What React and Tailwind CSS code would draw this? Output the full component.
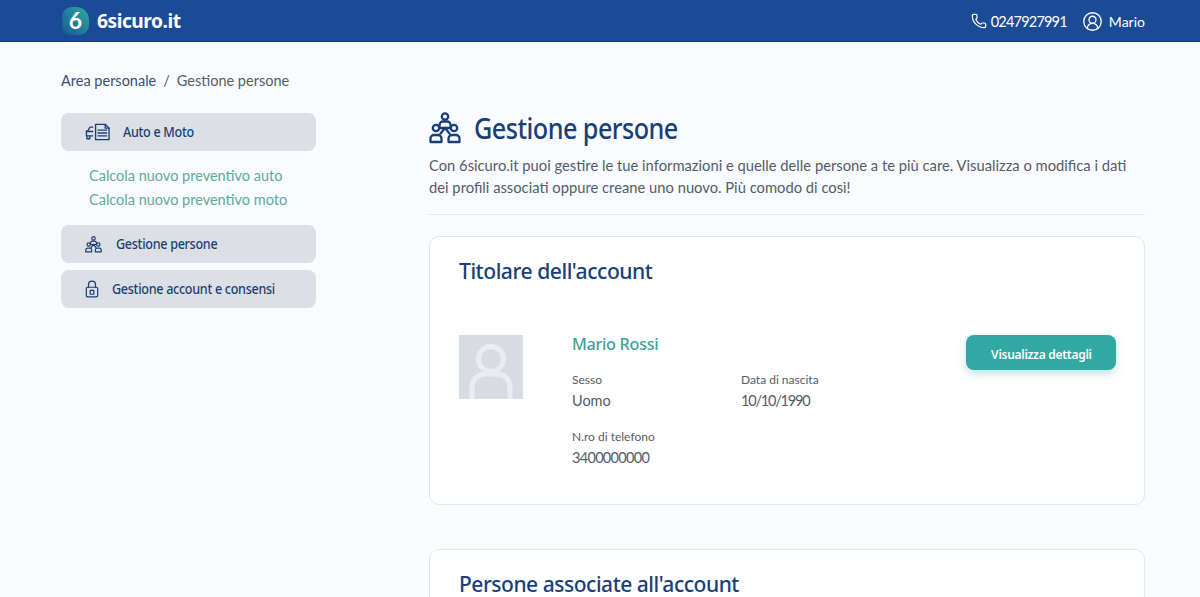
import React from 'react';
import { Phone, CircleUserRound } from 'lucide-react';

const bodyFont = "font-['Lato','Noto_Sans',sans-serif]";
const headFont = "font-['Noto_Sans',sans-serif]";

const PeopleIcon = ({ className }) => (
  <svg viewBox="0 0 32 32" fill="none" stroke="currentColor" strokeWidth="2.3" strokeLinejoin="round" strokeLinecap="round" className={className}>
    <circle cx="16" cy="4.5" r="3.2" />
    <path d="M10.5 16v-3a3.5 3.5 0 0 1 3.5-3.5h4a3.5 3.5 0 0 1 3.5 3.5v3z" />
    <circle cx="7" cy="16" r="3.2" />
    <path d="M1.5 30v-3.5A3.5 3.5 0 0 1 5 23h4a3.5 3.5 0 0 1 3.5 3.5V30z" />
    <circle cx="25" cy="16" r="3.2" />
    <path d="M19.5 30v-3.5A3.5 3.5 0 0 1 23 23h4a3.5 3.5 0 0 1 3.5 3.5V30z" />
    <path d="M16 16l-4.5 5.5M16 16l4.5 5.5" />
  </svg>
);

const CarDocIcon = ({ className }) => (
  <svg viewBox="0 0 26 18" fill="none" stroke="currentColor" strokeWidth="1.4" strokeLinejoin="round" strokeLinecap="round" className={className}>
    <path d="M11 1h10l4 4v12H11V1z" />
    <path d="M21 1v4h4" />
    <path d="M13.5 7h9M13.5 10h9M13.5 13h9" />
    <path d="M8 4H5L3 8H1.5v5H8M2 13v3h3v-3M1.5 8.5H8" />
  </svg>
);

const LockIcon = ({ className }) => (
  <svg viewBox="0 0 16 20" fill="none" stroke="currentColor" strokeWidth="1.4" strokeLinejoin="round" strokeLinecap="round" className={className}>
    <rect x="1.5" y="8" width="13" height="11" rx="1.5" />
    <path d="M4 8V5a4 4 0 0 1 8 0v3" />
    <rect x="6" y="11.5" width="4" height="4.5" />
  </svg>
);

const SideButton = ({ icon, label, pad, gap }) => (
  <div className={`flex items-center h-[38px] rounded-lg bg-[#dcdfe4] ${pad} ${gap}`}>
    {icon}
    <span className={`${headFont} inline-block origin-left scale-x-[0.93] text-[13.5px] font-medium tracking-[-0.3px] whitespace-nowrap text-[#1a3f78]`}>{label}</span>
  </div>
);

const Field = ({ label, value, valueClass, className }) => (
  <div className={className}>
    <div className="text-[12px] leading-[16px] text-[#555c66]">{label}</div>
    <div className={`mt-[3px] text-[14.5px] leading-[20px] text-[#555c66] ${valueClass}`}>{value}</div>
  </div>
);

export default function App() {
  return (
    <div className={`h-[597px] overflow-hidden bg-[#f9fbfe] ${bodyFont}`}>
      <header className="flex h-[42px] items-center justify-between border-b border-[#163c78] bg-[#1b4b97] pl-[62px] pr-[55px]">
        <div className="flex items-center gap-[8px]">
          <div className="flex h-[28px] w-[27px] items-center justify-center rounded-tl-[10px] rounded-tr-[13px] rounded-br-[10px] rounded-bl-[8px] bg-gradient-to-tr from-[#1c5596] via-[#237f9c] to-[#2fae9c] text-[23px] leading-none font-bold text-white">6</div>
          <span className={`${headFont} inline-block origin-left scale-x-[0.96] text-[20px] font-bold tracking-[-0.5px] text-white`}>6sicuro.it</span>
        </div>
        <div className="flex items-center pt-[1px] text-[14.5px] text-white">
          <Phone className="h-[16px] w-[16px]" strokeWidth={1.8} />
          <span className="ml-[4px] mt-[1px] tracking-[-0.8px]">0247927991</span>
          <CircleUserRound className="ml-[15px] h-[21px] w-[21px]" strokeWidth={1.5} />
          <span className="ml-[6px] text-[14px]">Mario</span>
        </div>
      </header>

      <div className="flex pl-[61px] pr-[55px]">
        <aside className="w-[255px] shrink-0">
          <div className="mt-[30px] flex h-[18px] items-center text-[14.5px] text-[#555c66]">
            <span className="text-[#3c4f6b]">Area personale</span>
            <span className="mx-[7px]">/</span>
            <span>Gestione persone</span>
          </div>
          <div className="mt-[23px]">
            <SideButton icon={<CarDocIcon className="h-[18px] w-[25px] text-[#1a3f78]" />} label="Auto e Moto" pad="pl-[24px]" gap="gap-[13px]" />
            <div className="pl-[28px] pt-[13px] pb-[13px] text-[14.5px] leading-[24px] text-[#5fa99b]">
              <div>Calcola nuovo preventivo auto</div>
              <div>Calcola nuovo preventivo moto</div>
            </div>
            <SideButton icon={<PeopleIcon className="h-[17px] w-[17px] text-[#1a3f78]" />} label="Gestione persone" pad="pl-[24px]" gap="gap-[14px]" />
            <div className="mt-[7px]">
              <SideButton icon={<LockIcon className="h-[18px] w-[14px] text-[#1a3f78]" />} label="Gestione account e consensi" pad="pl-[24px]" gap="gap-[13px]" />
            </div>
          </div>
        </aside>

        <main className="ml-[113px] w-[716px]">
          <div className="mt-[70px] flex items-center gap-[13px]">
            <PeopleIcon className="h-[32px] w-[32px] text-[#1a3f78]" />
            <h1 className={`${headFont} inline-block origin-left scale-x-90 text-[28px] leading-[32px] font-medium tracking-[-0.6px] text-[#1a3f78]`}>Gestione persone</h1>
          </div>
          <p className="mt-[10px] border-b border-[#e3e6ea] pb-[16px] text-[14.75px] leading-[22px] text-[#555c66]">
            Con 6sicuro.it puoi gestire le tue informazioni e quelle delle persone a te più care. Visualizza o modifica i dati dei profili associati oppure creane uno nuovo. Più comodo di così!
          </p>

          <section className="mt-[21px] h-[269px] rounded-[10px] border border-[#e3e6ea] bg-white pl-[29px] pr-[28px] pt-[19px]">
            <h2 className={`${headFont} origin-left scale-x-[0.96] text-[22px] leading-[28px] font-medium tracking-[-0.5px] text-[#1a3f78]`}>Titolare dell'account</h2>
            <div className="mt-[51px] flex items-start">
              <div className="flex h-[64px] w-[64px] shrink-0 items-end justify-center overflow-hidden bg-[#d8dce2]">
                <svg viewBox="0 0 64 64" className="h-[64px] w-[64px]" fill="none" stroke="#e9ecf0" strokeWidth="5">
                  <circle cx="32" cy="24" r="12.5" />
                  <path d="M13 64V52a13 13 0 0 1 13-13h12a13 13 0 0 1 13 13v12" />
                </svg>
              </div>
              <div className="ml-[49px] flex-1">
                <div className={`${headFont} origin-left scale-x-[0.98] text-[16.5px] leading-[18px] font-medium tracking-[-0.3px] text-[#3fa295]`}>Mario Rossi</div>
                <div className="mt-[19px] flex">
                  <Field label="Sesso" value="Uomo" className="w-[169px]" />
                  <Field label="Data di nascita" value="10/10/1990" valueClass="tracking-[-1.2px]" />
                </div>
                <Field label="N.ro di telefono" value="3400000000" valueClass="tracking-[-0.7px]" className="mt-[18px]" />
              </div>
              <button className="h-[35px] w-[150px] rounded-lg bg-[#2fa9a2] shadow-[0_4px_8px_rgba(47,169,162,0.3)]">
                <span className={`${headFont} inline-block scale-x-[0.925] text-[13px] font-semibold tracking-[-0.3px] whitespace-nowrap text-white`}>Visualizza dettagli</span>
              </button>
            </div>
          </section>

          <section className="mt-[44px] rounded-[10px] border border-[#e3e6ea] bg-white pl-[29px] pt-[19px] pb-[40px]">
            <h2 className={`${headFont} origin-left scale-x-[0.955] text-[22px] leading-[28px] font-medium tracking-[-0.5px] text-[#1a3f78]`}>Persone associate all'account</h2>
          </section>
        </main>
      </div>
    </div>
  );
}
